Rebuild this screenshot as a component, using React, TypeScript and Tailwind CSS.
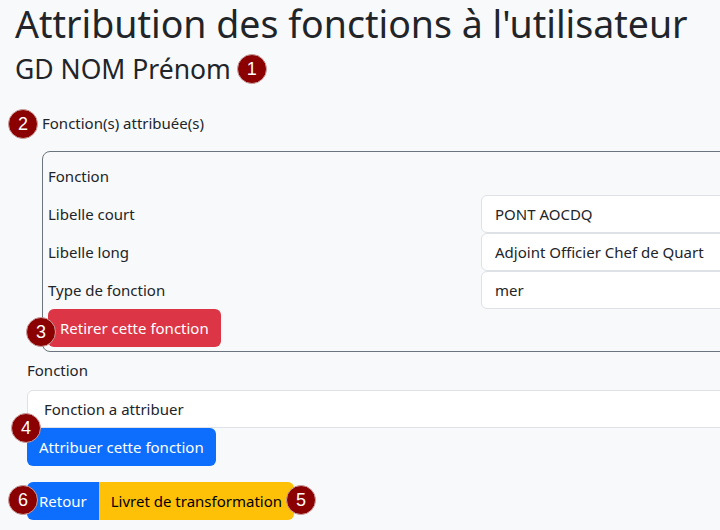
import React from "react";

function Badge({ n, className }: { n: number; className: string }) {
  return (
    <span
      className={
        "absolute flex h-[30px] w-[30px] items-center justify-center rounded-full border border-[#c9a0a0] bg-[#8b0000] text-[18px] leading-none text-white " +
        className
      }
      style={{ fontFamily: '"Liberation Sans", Arial, sans-serif' }}
    >
      {n}
    </span>
  );
}

function Row({ label, value }: { label: string; value?: string }) {
  return (
    <div className="flex h-[38px] items-center">
      <div className="w-[433px]">{label}</div>
      {value !== undefined && (
        <div className="flex h-[38px] w-[400px] items-center rounded-[6px] border border-[#dee2e6] bg-white pl-[13px]">
          {value}
        </div>
      )}
    </div>
  );
}

export default function App() {
  return (
    <div
      className="relative h-[530px] w-[720px] overflow-hidden bg-[#f8f9fa] text-[15px] text-[#212529]"
      style={{ fontFamily: '"Noto Sans", "Open Sans", sans-serif' }}
    >
      <div className="flex w-[1000px] flex-col items-start pl-[15px]">
        <h1 className="pt-[1px] text-[37.5px] leading-[1.2]">Attribution des fonctions à l'utilisateur</h1>
        <h3 className="relative mt-[8px] text-[26.5px] leading-[1.2]">
          GD NOM Prénom
          <Badge n={1} className="right-[-36px] top-[0px]" />
        </h3>
        <div className="relative mt-[25px] w-full pl-[27px]">
          <Badge n={2} className="left-[-7px] top-[-2px]" />
          <div className="leading-[24px]">Fonction(s) attribuée(s)</div>
          <div className="mt-[16px] flex flex-col items-start rounded-[8px] border border-[#6c757d] pb-[4px] pl-[5px] pt-[5px]">
            <Row label="Fonction" />
            <Row label="Libelle court" value="PONT AOCDQ" />
            <Row label="Libelle long" value="Adjoint Officier Chef de Quart" />
            <Row label="Type de fonction" value="mer" />
            <div className="relative">
              <Badge n={3} className="left-[-22px] top-[8px]" />
              <button className="h-[38px] rounded-[6px] bg-[#dc3545] px-[12px] text-white">
                Retirer cette fonction
              </button>
            </div>
          </div>
        </div>
        <div className="flex w-full flex-col items-start pl-[12px]">
          <div className="mt-[6px] leading-[24px]">Fonction</div>
          <div className="mt-[8px] flex h-[38px] w-[900px] items-center rounded-[6px] border border-[#dee2e6] bg-white pl-[16px]">
            Fonction a attribuer
          </div>
          <div className="relative">
            <Badge n={4} className="left-[-16px] top-[-15px]" />
            <button className="h-[38px] rounded-[6px] bg-[#0d6efd] px-[12px] text-white">
              Attribuer cette fonction
            </button>
          </div>
          <div className="relative mt-[16px] flex">
            <Badge n={6} className="left-[-19px] top-[3px]" />
            <button className="h-[38px] rounded-l-[6px] bg-[#0d6efd] px-[12px] text-white">Retour</button>
            <button className="h-[38px] rounded-r-[6px] bg-[#ffc107] px-[12px] text-black">
              Livret de transformation
            </button>
            <Badge n={5} className="right-[-22px] top-[3px]" />
          </div>
        </div>
      </div>
    </div>
  );
}
